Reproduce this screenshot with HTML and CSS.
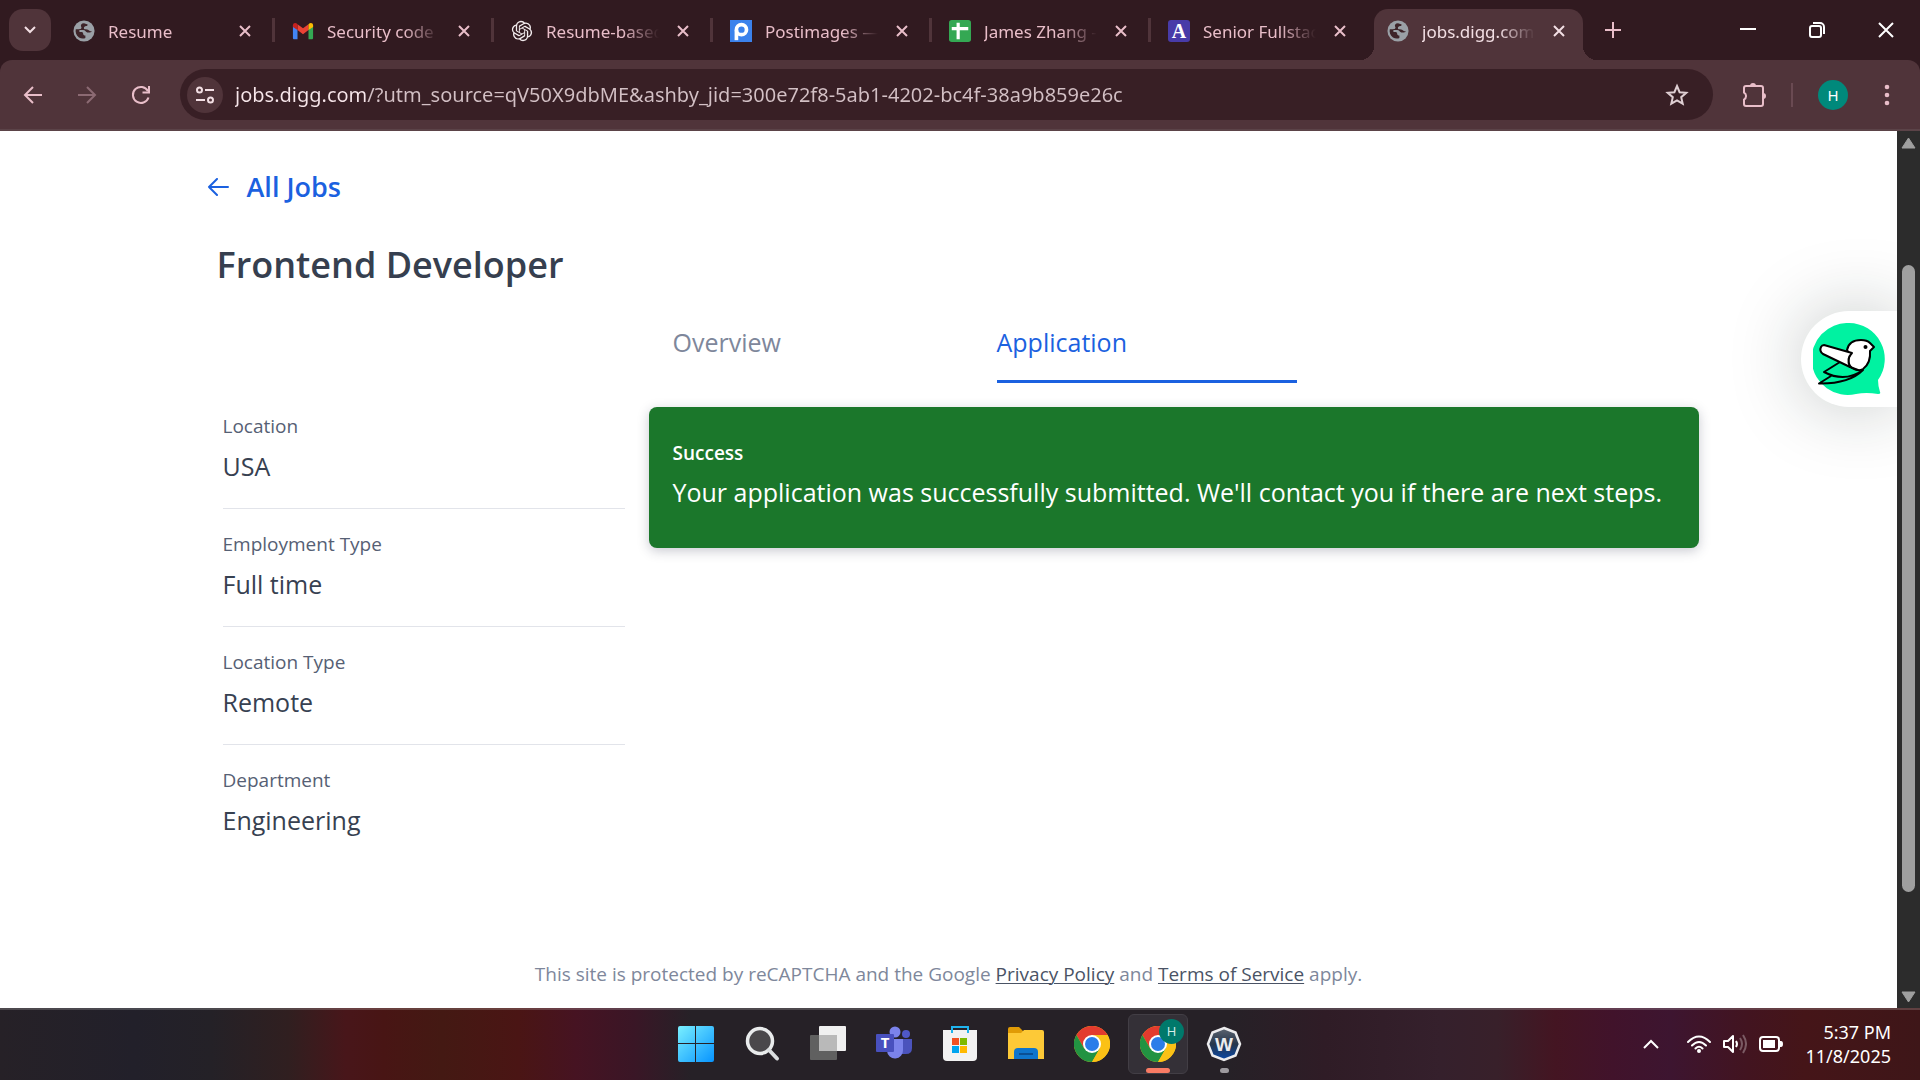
FILE: index.html
```html
<!DOCTYPE html>
<html lang="en">
<head>
<meta charset="utf-8">
<title>jobs.digg.com</title>
<link rel="stylesheet" href="styles.css">
</head>
<body>
<svg class="defs" aria-hidden="true">
  <symbol id="close" viewBox="0 0 12 12"><path d="M1 1l10 10M11 1L1 11" fill="none" stroke="currentColor" stroke-width="2"/></symbol>
  <symbol id="globe" viewBox="0 0 24 24"><circle cx="12" cy="12" r="11.500" fill="#9aa0a6"/><path d="M12 3.500c-3 0-4 2-3 4 1 1.500-1 2.500-3 2.500H3c-.6 3 .5 7 3.500 9 2.500 1.600 5.500 1.500 7 .5v-2.500c-1.500 0-2.500-1-2.500-2.500 0-1-1-1.500-2.500-1.500H7v-2h4c2.500 0 2.500 2 4.500 2.500 2 .3 4 .2 5.300-1-.8 0-2.300 0-3.300-1-1.500-1.500-3-1.500-4.500-1.500s-1.500-2.500 0-3 3 0 3-2z" fill="#3d2429"/></symbol>
  <symbol id="chrome" viewBox="0 0 36 36">
    <circle cx="18" cy="18" r="18" fill="#fbc116"/>
    <path d="M2.400 9A18 18 0 0 1 33.600 9L18 9 10.200 22.500z" fill="#e33b2e"/>
    <path d="M2.400 9A18 18 0 0 0 18 36L25.800 22.500 10.200 22.500z" fill="#229342"/>
    <path d="M18 9h15.600A18 18 0 0 1 18 36l7.800-13.500z" fill="#fbc116"/>
    <circle cx="18" cy="18" r="9" fill="#fff"/><circle cx="18" cy="18" r="7" fill="#2b7de9"/>
  </symbol>
</svg>

<header class="browser">
  <div class="tabstrip">
    <button class="tab-search" aria-label="Search tabs"><svg width="14" height="10" viewBox="0 0 14 10"><path d="M2 2l5 5 5-5" fill="none" stroke="currentColor" stroke-width="2"/></svg></button>
    <div class="tabs">
      <div class="tab">
        <svg class="favicon" viewBox="0 0 24 24"><use href="#globe"/></svg>
        <span class="tab-title">Resume</span>
        <button class="tab-close" aria-label="Close tab"><svg class="x"><use href="#close"/></svg></button>
      </div>
      <div class="tab">
        <svg class="favicon" viewBox="0 0 24 24"><path d="M1 6v13.500c0 1 .6 1.500 1.500 1.500H6V10z" fill="#4285f4"/><path d="M23 6v13.500c0 1-.6 1.500-1.500 1.500H18V10z" fill="#34a853"/><path d="M6 4.500L12 9l6-4.500V11l-6 4.500L6 11z" fill="#ea4335"/><path d="M1 6c0-3 3-3.500 5-1.500V11L1 7.500z" fill="#c5221f"/><path d="M23 6c0-3-3-3.500-5-1.500V11l5-3.500z" fill="#fbbc04"/></svg>
        <span class="tab-title">Security code</span>
        <button class="tab-close" aria-label="Close tab"><svg class="x"><use href="#close"/></svg></button>
      </div>
      <div class="tab">
        <svg class="favicon" viewBox="-1 -1 26 26"><path fill="#f3ecee" d="M22.2819 9.8211a5.9847 5.9847 0 0 0-.5157-4.9108 6.0462 6.0462 0 0 0-6.5098-2.9A6.0651 6.0651 0 0 0 4.9807 4.1818a5.9847 5.9847 0 0 0-3.9977 2.9 6.0462 6.0462 0 0 0 .7427 7.0966 5.98 5.98 0 0 0 .511 4.9107 6.051 6.051 0 0 0 6.5146 2.9001A5.9847 5.9847 0 0 0 13.2599 24a6.0557 6.0557 0 0 0 5.7718-4.2058 5.9894 5.9894 0 0 0 3.9977-2.9001 6.0557 6.0557 0 0 0-.7475-7.0729zm-9.022 12.6081a4.4755 4.4755 0 0 1-2.8764-1.0408l.1419-.0804 4.7783-2.7582a.7948.7948 0 0 0 .3927-.6813v-6.7369l2.02 1.1686a.071.071 0 0 1 .038.052v5.5826a4.504 4.504 0 0 1-4.4945 4.4944zm-9.6607-4.1254a4.4708 4.4708 0 0 1-.5346-3.0137l.142.0852 4.783 2.7582a.7712.7712 0 0 0 .7806 0l5.8428-3.3685v2.3324a.0804.0804 0 0 1-.0332.0615L9.74 19.9502a4.4992 4.4992 0 0 1-6.1408-1.6464zM2.3408 7.8956a4.485 4.485 0 0 1 2.3655-1.9728V11.6a.7664.7664 0 0 0 .3879.6765l5.8144 3.3543-2.0201 1.1685a.0757.0757 0 0 1-.071 0l-4.8303-2.7865A4.504 4.504 0 0 1 2.3408 7.872zm16.5963 3.8558L13.1038 8.364 15.1192 7.2a.0757.0757 0 0 1 .071 0l4.8303 2.7913a4.4944 4.4944 0 0 1-.6765 8.1042v-5.6772a.79.79 0 0 0-.407-.667zm2.0107-3.0231l-.142-.0852-4.7735-2.7818a.7759.7759 0 0 0-.7854 0L9.409 9.2297V6.8974a.0662.0662 0 0 1 .0284-.0615l4.8303-2.7866a4.4992 4.4992 0 0 1 6.6802 4.66zM8.3065 12.863l-2.02-1.1638a.0804.0804 0 0 1-.038-.0567V6.0742a4.4992 4.4992 0 0 1 7.3757-3.4537l-.142.0805L8.704 5.459a.7948.7948 0 0 0-.3927.6813zm1.0976-2.3654l2.602-1.4998 2.6069 1.4998v2.9994l-2.5974 1.4997-2.6067-1.4997Z"/></svg>
        <span class="tab-title">Resume-based</span>
        <button class="tab-close" aria-label="Close tab"><svg class="x"><use href="#close"/></svg></button>
      </div>
      <div class="tab">
        <svg class="favicon" viewBox="0 0 24 24"><path d="M0 0h24v24H0z" fill="#3b82ec"/><path d="M7 22V11" stroke="#fff" stroke-width="4"/><circle cx="12.500" cy="10.500" r="5.500" fill="none" stroke="#fff" stroke-width="4"/></svg>
        <span class="tab-title">Postimages —</span>
        <button class="tab-close" aria-label="Close tab"><svg class="x"><use href="#close"/></svg></button>
      </div>
      <div class="tab">
        <svg class="favicon" viewBox="0 0 24 24"><rect width="24" height="24" rx="3" fill="#34a853"/><path d="M10 3v18M3 9.500h18" stroke="#fff" stroke-width="3.500"/></svg>
        <span class="tab-title">James Zhang -</span>
        <button class="tab-close" aria-label="Close tab"><svg class="x"><use href="#close"/></svg></button>
      </div>
      <div class="tab">
        <span class="favicon letter-icon">A</span>
        <span class="tab-title">Senior Fullstac</span>
        <button class="tab-close" aria-label="Close tab"><svg class="x"><use href="#close"/></svg></button>
      </div>
      <div class="tab active">
        <svg class="favicon" viewBox="0 0 24 24"><use href="#globe"/></svg>
        <span class="tab-title">jobs.digg.com</span>
        <button class="tab-close" aria-label="Close tab"><svg class="x"><use href="#close"/></svg></button>
      </div>
      <button class="new-tab" aria-label="New tab"><svg width="16" height="16" viewBox="0 0 16 16"><path d="M8 0v16M0 8h16" stroke="currentColor" stroke-width="2"/></svg></button>
    </div>
    <div class="window-controls">
      <button aria-label="Minimize"><svg width="16" height="16" viewBox="0 0 16 16"><path d="M0 7h16" stroke="currentColor" stroke-width="2"/></svg></button>
      <button aria-label="Restore"><svg width="16" height="16" viewBox="0 0 16 16" fill="none" stroke="currentColor" stroke-width="2"><rect x="1" y="4" width="11" height="11" rx="2"/><path d="M4 1h7a4 4 0 0 1 4 4v7"/></svg></button>
      <button aria-label="Close"><svg width="16" height="16" viewBox="0 0 16 16"><path d="M1 1l14 14M15 1L1 15" stroke="currentColor" stroke-width="2"/></svg></button>
    </div>
  </div>

  <div class="toolbar">
    <button class="nav" aria-label="Back"><svg width="20" height="20" viewBox="0 0 20 20"><path d="M10 2l-8 8 8 8M2 10h17" fill="none" stroke="currentColor" stroke-width="2"/></svg></button>
    <button class="nav dim" aria-label="Forward"><svg width="20" height="20" viewBox="0 0 20 20"><path d="M10 2l8 8-8 8M18 10H1" fill="none" stroke="currentColor" stroke-width="2"/></svg></button>
    <button class="nav" aria-label="Reload"><svg width="20" height="20" viewBox="0 0 20 20"><path d="M17.500 12.500a8 8 0 1 1-.6-6.500M18 1v6.500h-6.500" fill="none" stroke="currentColor" stroke-width="2"/></svg></button>
    <div class="omnibox">
      <button class="site-info" aria-label="Site information"><svg width="20" height="20" viewBox="0 0 20 20" fill="none" stroke="currentColor" stroke-width="2"><circle cx="4.500" cy="5" r="2.500"/><path d="M10 5h9M1 15h9"/><circle cx="15.500" cy="15" r="2.500"/></svg></button>
      <input class="url" type="text" aria-label="Address" value="jobs.digg.com/?utm_source=qV50X9dbME&amp;ashby_jid=300e72f8-5ab1-4202-bc4f-38a9b859e26c">
      <button class="star" aria-label="Bookmark this tab"><svg width="24" height="24" viewBox="0 0 24 24"><path d="M12 3l2.600 6.200 6.700.6-5.100 4.400 1.500 6.500-5.700-3.400-5.700 3.400 1.500-6.500-5.100-4.400 6.700-.6z" fill="none" stroke="currentColor" stroke-width="2"/></svg></button>
    </div>
    <button class="ext" aria-label="Extensions"><svg width="26" height="26" viewBox="0 0 26 26"><path d="M3 6q0-2 2-2h15q2 0 2 2v16q0 2-2 2H5q-2 0-2-2v-4.500a4 4 0 0 0 0-7z" fill="none" stroke="currentColor" stroke-width="2"/><path d="M9 4a3 3 0 0 1 6 0zM22 11a3 3 0 0 1 0 6z" fill="currentColor"/></svg></button>
    <span class="divider"></span>
    <button class="avatar" aria-label="Profile">H</button>
    <button class="menu" aria-label="Menu"><svg width="6" height="22" viewBox="0 0 6 22" fill="currentColor"><circle cx="3" cy="3" r="2.300"/><circle cx="3" cy="11" r="2.300"/><circle cx="3" cy="19" r="2.300"/></svg></button>
  </div>
</header>

<div class="viewport">
  <div class="page">
    <main class="container">
      <a class="back" href="#"><svg width="22" height="18" viewBox="0 0 22 18"><path d="M10 1L2 9l8 8M2 9h19" fill="none" stroke="currentColor" stroke-width="2" stroke-linecap="round" stroke-linejoin="round"/></svg>All Jobs</a>
      <h1>Frontend Developer</h1>
      <div class="job">
        <nav class="job-tabs"><a href="#">Overview</a><a class="current" href="#">Application</a></nav>
        <dl class="facts">
          <div><dt>Location</dt><dd>USA</dd></div>
          <div><dt>Employment Type</dt><dd>Full time</dd></div>
          <div><dt>Location Type</dt><dd>Remote</dd></div>
          <div><dt>Department</dt><dd>Engineering</dd></div>
        </dl>
        <section class="success">
          <h2>Success</h2>
          <p>Your application was successfully submitted. We'll contact you if there are next steps.</p>
        </section>
      </div>
    </main>
    <footer>This site is protected by reCAPTCHA and the Google <a href="#">Privacy Policy</a> and <a href="#">Terms of Service</a> apply.</footer>
    <button class="widget" aria-label="Open assistant">
      <svg width="72" height="72" viewBox="0 0 72 72" stroke-linejoin="round" stroke-linecap="round">
        <path d="M36 0a36 36 0 0 1 29 57q0 6 2 12 1 2-2 2-12-2-22 0A36 36 0 1 1 36 0z" fill="#00f2a1"/>
        <g stroke="#000" stroke-width="2">
          <path d="M50 47Q36 61 6 60.500L18 53M27 39L11 49Q32 60 50 47" fill="#00f2a1"/>
          <path d="M34 27Q36 17 48 17q6 0 9 3l4 4-4 4q1 12-7 18-5 3-11-1-6-5-2-13z" fill="#fff"/>
          <path d="M11 22l28 8q-6 6-2 14L10 31q-4-3-2-7 1-2 3-2z" fill="#fff"/>
          <path d="M37 44l8 3" fill="none"/>
        </g>
        <circle cx="52.500" cy="24" r="2"/>
      </svg>
    </button>
  </div>
  <div class="scrollbar">
    <svg width="15" height="12" viewBox="0 0 15 12"><path d="M7.500 1L14 11H1z" fill="#9f9f9f" stroke="#9f9f9f" stroke-linejoin="round"/></svg>
    <div class="track"><span class="lead"></span><span class="thumb"></span><span class="rest"></span></div>
    <svg width="15" height="12" viewBox="0 0 15 12"><path d="M7.500 11L14 1H1z" fill="#9f9f9f" stroke="#9f9f9f" stroke-linejoin="round"/></svg>
  </div>
</div>

<div class="taskbar">
  <div class="apps">
    <button class="app" aria-label="Start"><svg width="36" height="36" viewBox="0 0 36 36"><defs><linearGradient id="win" x1="0" y1="0" x2="1" y2="1"><stop offset="0" stop-color="#7af0ff"/><stop offset="1" stop-color="#0794ff"/></linearGradient></defs><path d="M2 0h15v17H0V2q0-2 2-2zM18 0h16q2 0 2 2v15H18zM0 18h17v18H2q-2 0-2-2zM18 18h18v16q0 2-2 2H18z" fill="url(#win)"/></svg></button>
    <button class="app" aria-label="Search"><svg width="36" height="36" viewBox="0 0 36 36"><circle cx="16" cy="15" r="12.500" fill="#4a484b" stroke="#e9ebec" stroke-width="3.500"/><path d="M25 24l8 8.500" stroke="#dcdfe1" stroke-width="4" stroke-linecap="round"/></svg></button>
    <button class="app" aria-label="Task view"><svg width="36" height="36" viewBox="0 0 36 36"><rect x="9" y="0" width="27" height="25" rx="1" fill="#f0f0f0"/><rect x="0" y="9" width="27" height="25" rx="1" fill="#606060"/><path d="M9 9h18v16H9z" fill="#b9b9b9"/></svg></button>
    <button class="app" aria-label="Teams"><svg width="36" height="36" viewBox="0 0 36 36"><circle cx="30" cy="8" r="4" fill="#4f58c8"/><path d="M25 13h11v9q0 6-6 6h-5z" fill="#4b53bc"/><circle cx="19" cy="6" r="5.500" fill="#7b83eb"/><path d="M11 13h16v11a8 8 0 0 1-16 1z" fill="#7b83eb"/><rect x="0" y="8" width="18" height="18" rx="1" fill="#4850be"/><text x="9" y="22" text-anchor="middle" class="teams-letter">T</text></svg></button>
    <button class="app" aria-label="Store"><svg width="36" height="36" viewBox="0 0 36 36"><path d="M1 4h34v27q0 4-4 4H5q-4 0-4-4z" fill="#f2f2f2"/><path d="M10 7V1h16v6" fill="none" stroke="#1fb4ee" stroke-width="2"/><path d="M10 12h7v7h-7z" fill="#f25022"/><path d="M18 12h7v7h-7z" fill="#7fba00"/><path d="M10 20h7v7h-7z" fill="#00a4ef"/><path d="M18 20h7v7h-7z" fill="#ffb900"/></svg></button>
    <button class="app" aria-label="File Explorer"><svg width="36" height="36" viewBox="0 0 36 36"><path d="M0 10V3q0-2 2-2h9l4 4v5z" fill="#e09b06"/><path d="M0 7h13l3-3h18q2 0 2 2v27H0z" fill="#fdc937"/><path d="M6 33v-7q0-4 4-4h16q4 0 4 4v7z" fill="#0f75cc"/><path d="M11 28h14" stroke="#0a4f94" stroke-width="2"/></svg></button>
    <button class="app" aria-label="Chrome"><svg width="36" height="36"><use href="#chrome"/></svg></button>
    <button class="app focused" aria-label="Chrome, profile H"><svg width="36" height="36"><use href="#chrome"/></svg><span class="badge">H</span></button>
    <button class="app running" aria-label="W app"><svg width="36" height="36" viewBox="0 0 36 36"><defs><linearGradient id="oct" x1="0" y1="0" x2="0" y2="1"><stop offset="0" stop-color="#5d6570"/><stop offset=".5" stop-color="#26364c"/><stop offset="1" stop-color="#0848a8"/></linearGradient></defs><path d="M18 2l11.500 4.500L34 18l-4.500 11.500L18 34 6.500 29.500 2 18 6.500 6.500z" fill="url(#oct)" stroke="#ececee" stroke-width="2.500"/><text x="18" y="25" text-anchor="middle" class="w-letter">W</text></svg></button>
  </div>
  <div class="tray">
    <svg width="18" height="12" viewBox="0 0 18 12"><path d="M2 10l7-7 7 7" fill="none" stroke="#fff" stroke-width="2"/></svg>
    <svg class="wifi" width="24" height="20" viewBox="0 0 24 20" fill="none" stroke="#fff" stroke-width="2" stroke-linecap="round"><path d="M1 8Q12-3 23 8M5 11.500q7-7 14 0M8.500 14.500q3.500-3.500 7 0"/><circle cx="12" cy="17" r="1"/></svg>
    <svg width="24" height="22" viewBox="0 0 24 22" fill="none" stroke="#fff" stroke-width="2" stroke-linejoin="round"><path d="M1 8h4l5-5v16l-5-5H1z"/><path d="M13 8q2 3 0 6"/><path d="M17 5q4 6 0 12M20 2q6 9 0 18" stroke-opacity=".3"/></svg>
    <svg width="24" height="16" viewBox="0 0 24 16"><rect x="1" y="1" width="19" height="14" rx="3" fill="none" stroke="#fff" stroke-width="2"/><rect x="4" y="4" width="12" height="8" fill="#fff"/><path d="M21 5h1q2 0 2 3t-2 3h-1z" fill="#fff"/></svg>
    <div class="clock"><span>5:37 PM</span><span>11/8/2025</span></div>
  </div>
</div>
</body>
</html>
```
FILE: styles.css
```css
* { box-sizing: border-box; }
body {
  margin: 0;
  height: 100vh;
  display: flex;
  flex-direction: column;
  overflow: hidden;
  font-family: "Open Sans", "Noto Sans", sans-serif;
  background: #fff;
}
button {
  border: 0;
  padding: 0;
  background: none;
  color: inherit;
  font: inherit;
  display: flex;
  align-items: center;
  justify-content: center;
  flex: none;
}
svg { display: block; flex: none; }
h1, h2, p, dl, dd { margin: 0; }
.defs { position: absolute; width: 0; height: 0; }

/* Browser chrome */
.browser { background: #311a20; color: #e9bec9; flex: none; font-family: "Noto Sans", sans-serif; }
.tabstrip { display: flex; height: 60px; padding-left: 9px; }
.tab-search {
  width: 42px;
  height: 42px;
  margin: 9px 9px 0 0;
  border-radius: 14px;
  background: #50343a;
  color: #f3dfe4;
}
.tabs { display: flex; flex: 1; min-width: 0; padding-top: 9px; }
.tab {
  display: flex;
  align-items: center;
  flex: 0 1 219px;
  min-width: 0;
  height: 51px;
  padding: 0 18px 8px 13px;
  border-right: 10px solid transparent;
  position: relative;
}
.tab::before {
  content: "";
  position: absolute;
  right: -6px;
  top: 9px;
  width: 3px;
  height: 24px;
  background: #50343a;
}
.favicon { width: 22px; height: 22px; flex: none; }
.letter-icon {
  border-radius: 3px;
  background: #483ba8;
  color: #fff;
  font: 700 20px/22px "Liberation Serif", serif;
  text-align: center;
}
.tab-title {
  flex: 1;
  min-width: 0;
  margin: 2px 12px 0 13px;
  overflow: hidden;
  white-space: nowrap;
  font-size: 17px;
  line-height: 26px;
  -webkit-mask-image: linear-gradient(90deg, #000 calc(100% - 42px), transparent calc(100% - 6px));
  mask-image: linear-gradient(90deg, #000 calc(100% - 42px), transparent calc(100% - 6px));
}
.tab-close { width: 12px; }
.x { width: 12px; height: 12px; }
.tab.active { background: #50343a; border: 0; border-radius: 14px 14px 0 0; flex-basis: 209px; color: #f3dfe4; }
.tab:nth-child(6)::before { display: none; }
.tab.active::before, .tab.active::after {
  content: "";
  position: absolute;
  top: auto;
  bottom: 0;
  width: 14px;
  height: 14px;
}
.tab.active::before { left: -14px; right: auto; background: radial-gradient(circle at 0 0, transparent 14px, #50343a 14px); }
.tab.active::after { right: -14px; background: radial-gradient(circle at 100% 0, transparent 14px, #50343a 14px); }
.new-tab { width: 60px; height: 42px; }
.window-controls { display: flex; color: #fff; }
.window-controls button { width: 69px; height: 60px; }

.toolbar {
  display: flex;
  align-items: center;
  height: 71px;
  padding: 0 19px 0 6px;
  background: #50343a;
  border-bottom: 2px solid #5b4348;
  border-radius: 12px 12px 0 0;
}
.nav { width: 54px; height: 42px; }
.dim { color: #8c6a73; }
.omnibox {
  display: flex;
  align-items: center;
  flex: 1;
  height: 51px;
  margin-left: 12px;
  padding: 0 24px 0 7px;
  border-radius: 26px;
  background: #381f25;
}
.site-info { width: 36px; height: 36px; border-radius: 50%; background: #50343a; color: #f3dfe4; }
.url {
  flex: 1;
  min-width: 0;
  margin: 0 12px;
  padding: 0;
  border: 0;
  outline: 0;
  font: 20px/28px "Noto Sans", sans-serif;
  color: transparent;
  background: linear-gradient(90deg, #f7e6ea 131px, #d3c0c5 131px);
  -webkit-background-clip: text;
  background-clip: text;
}
.star { color: #dfcfd3; }
.ext { margin: 0 24px 0 28px; }
.divider { width: 2px; height: 24px; background: #6a4a52; }
.avatar {
  width: 30px;
  height: 30px;
  margin: 0 17px 0 25px;
  border-radius: 50%;
  background: #00897b;
  color: #fff;
  font-size: 15px;
}
.menu { width: 44px; height: 36px; margin-right: -8px; }

/* Web page */
.viewport { display: flex; flex: 1; min-height: 0; }
.page {
  flex: 1;
  min-width: 0;
  display: flex;
  flex-direction: column;
  position: relative;
  overflow: hidden;
  padding-top: 36px;
  color: #374151;
}
.container { width: 100%; max-width: 1500px; margin: 0 auto; padding: 0 0 0 8px; }
.back {
  display: inline-flex;
  align-items: center;
  gap: 18px;
  font-size: 27px;
  line-height: 40px;
  font-weight: 600;
  color: #1b61e0;
  text-decoration: none;
}
h1 { padding: 0 10px; margin: 34px 0 35px; font-size: 36px; line-height: 48px; font-weight: 600; color: #363f4f; }
.job {
  display: grid;
  grid-template-columns: 402fr 1050fr;
  column-gap: 24px;
  row-gap: 8px;
  padding-left: 16px;
}
.job-tabs { grid-column: 2; display: flex; gap: 24px; padding-left: 24px; }
.job-tabs a {
  width: 300px;
  padding-bottom: 20px;
  border-bottom: 3px solid transparent;
  font-size: 25px;
  line-height: 36px;
  color: #7e879b;
  text-decoration: none;
}
.job-tabs .current { color: #1b61e0; border-color: #1b61e0; }
.facts div { padding: 21px 0 22px; border-bottom: 1px solid #e2e4ea; }
.facts div:last-child { border: 0; }
dt { font-size: 19px; line-height: 28px; color: #566074; }
dd { margin-top: 6px; font-size: 25px; line-height: 40px; }
.success {
  align-self: start;
  margin-top: 16px;
  padding: 32px 24px 36px;
  border-radius: 8px;
  background: #1b772b;
  color: #fff;
  box-shadow: 0 3px 12px rgba(40, 45, 70, .25);
}
h2 { font-size: 19px; line-height: 28px; font-weight: 600; }
.success p { margin-top: 5px; font-size: 25px; line-height: 40px; }
footer { margin-top: auto; padding-bottom: 20px; text-align: center; font-size: 19px; line-height: 28px; color: #7e879b; }
footer a { color: #4a5365; text-underline-offset: 2px; text-decoration-thickness: 1px; }
.widget {
  position: absolute;
  right: 0;
  top: 180px;
  width: 96px;
  height: 96px;
  border-radius: 48px 0 0 48px;
  background: #fff;
  box-shadow: 0 0 72px rgba(20, 35, 30, .25);
}

.scrollbar {
  width: 23px;
  flex: none;
  display: flex;
  flex-direction: column;
  align-items: center;
  gap: 2px;
  padding: 6px 0 5px;
  background: #2c2c2c;
}
.track { flex: 1; display: flex; flex-direction: column; }
.lead { flex: 114; }
.thumb { flex: 627; width: 13px; border-radius: 7px; background: #9f9f9f; }
.rest { flex: 97; }

/* Taskbar */
.taskbar {
  display: grid;
  grid-template-columns: 1fr auto 1fr;
  height: 72px;
  flex: none;
  border-top: 2px solid rgba(255, 255, 255, .18);
  background: linear-gradient(90deg, #262127 0, #22202a 7%, #242127 11%, #301f20 15%, #48161a 18%, #481514 20%, #441913 23%, #4a1514 27%, #461322 30%, #3a1626 33%, #262127 36%, #262127 64%, #2f1c26 69%, #35202c 75%, #38202a 78%, #441522 81%, #41132b 84%, #3d1530 87%, #421420 91%, #451518 94%, #3e1618 100%) border-box;
}
.apps { grid-column: 2; display: flex; gap: 6px; padding-top: 4px; }
.app { position: relative; width: 60px; height: 60px; border: 1px solid transparent; border-radius: 6px; }
.focused { background: #343037; border-color: #423e45; }
.focused::after, .running::after {
  content: "";
  position: absolute;
  bottom: 0;
  width: 24px;
  height: 5px;
  border-radius: 3px;
  background: #f97b64;
}
.running::after { width: 9px; background: #9d9a9f; }
.badge {
  position: absolute;
  right: 3px;
  top: 4px;
  width: 25px;
  height: 25px;
  border-radius: 50%;
  background: #00796b;
  color: #d8eeea;
  font-size: 13px;
  line-height: 25px;
}
.teams-letter { font: 700 15px "Open Sans", sans-serif; fill: #fff; }
.w-letter { font: 700 19px "Liberation Sans", sans-serif; fill: #ececee; }
.tray { display: flex; align-items: center; justify-content: flex-end; gap: 12px; padding: 0 29px 2px 0; color: #fff; }
.wifi { margin-left: 15px; }
.clock { display: flex; flex-direction: column; align-items: flex-end; min-width: 96px; font: 18px/24px "Noto Sans", sans-serif; }
```
